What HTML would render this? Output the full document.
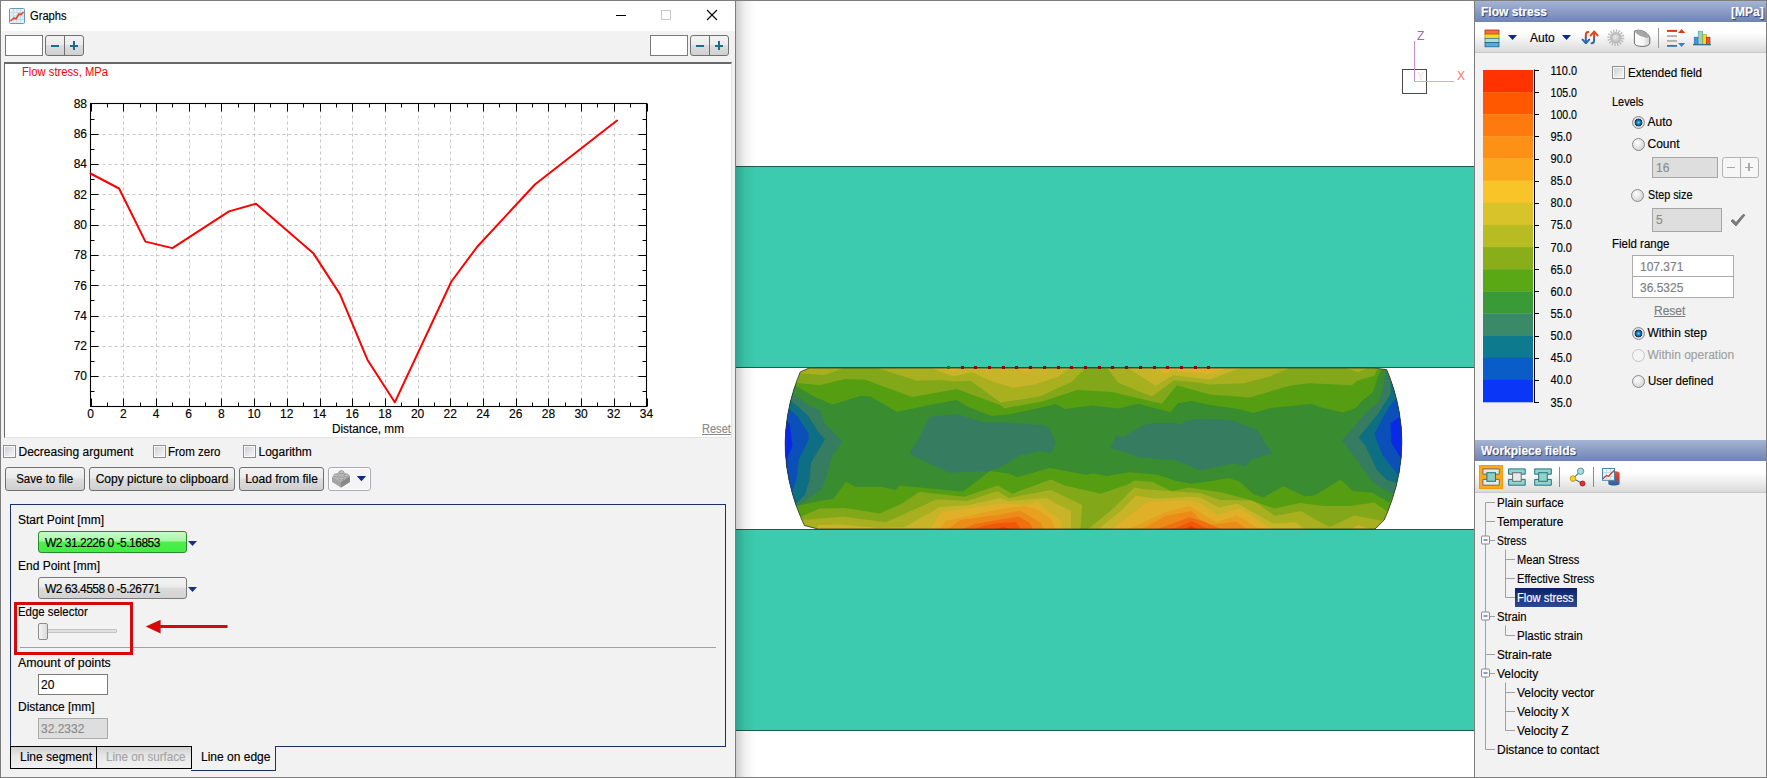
<!DOCTYPE html>
<html><head><meta charset="utf-8">
<style>
*{box-sizing:border-box}
html,body{margin:0;padding:0}
body{width:1767px;height:778px;position:relative;overflow:hidden;background:#f2f2f2;font-family:"Liberation Sans",sans-serif;font-size:12px;color:#000}
.a{position:absolute}
.t{position:absolute;font:12px/14px "Liberation Sans",sans-serif;white-space:nowrap;-webkit-text-stroke:0.15px currentColor}
svg.a{overflow:visible}
.spin{width:39px;height:21px;border:1px solid #707070;border-radius:3px;background:linear-gradient(#f3f3f3,#ebebeb 45%,#dddddd 50%,#d0d0d0)}
.spin:before{content:"";position:absolute;left:18px;top:0;width:1px;height:19px;background:#707070}
.spin:after{content:"";position:absolute;left:5px;top:8.5px;width:8px;height:2.5px;background:#1f6c8a;box-shadow:19px 0 0 #1f6c8a}
.spin i{position:absolute;left:26.8px;top:5.2px;width:2.5px;height:8.5px;background:#1f6c8a}
.cb{width:13px;height:13px;border:1px solid #8e8f8f;background:linear-gradient(135deg,#c8ccd2,#eeeeee 70%,#f4f4f4);box-shadow:inset 0 0 0 1px #f8f8f8}
.btn{-webkit-text-stroke:0.15px #000;height:24px;border:1px solid #707070;border-radius:3px;background:linear-gradient(#f2f2f2,#ebebeb 45%,#dddddd 50%,#cfcfcf);text-align:center;font:12px/22px "Liberation Sans",sans-serif;white-space:nowrap}

.hdr{background:linear-gradient(#a4b4d4,#8a9cc4 50%,#6e84b4)}
.hdt{color:#fff;font-weight:bold;text-shadow:1px 1px 1px #2a3a6a}
.tbar{background:linear-gradient(#ffffff,#ffffff 35%,#ececec 70%,#dadada);border-bottom:1px solid #c8c8c8}
.rad{width:13px;height:13px;border-radius:50%;border:1.2px solid #8a8a8a;background:radial-gradient(circle at 40% 35%,#ffffff,#d8d8d8 70%,#c8c8c8)}
.rad.on{background:radial-gradient(circle at 50% 50%,#60c8f4 0,#1a90d0 1.6px,#0e4a7a 3px,#163050 3.6px,#e4e4e4 4.2px,#d4d4d4 6px)}
.rad.dis{border-color:#c4c4c4;background:#f4f4f4}
</style></head><body>
<!-- ============ LEFT WINDOW ============ -->
<div class="a" style="left:0;top:0;width:736px;height:778px;background:#f2f2f2;border:1px solid #7d7d7d"></div>
<div class="a" style="left:1px;top:1px;width:734px;height:30px;background:#fff"></div>
<!-- title icon -->
<svg class="a" style="left:9px;top:8px" width="16" height="16" viewBox="0 0 16 16">
 <rect x="0.5" y="0.5" width="15" height="15" rx="1" fill="#e4f0f6" stroke="#6d98b4"/>
 <path d="M4.5 1v14M8 1v14M11.5 1v14M1 4.5h14M1 8h14M1 11.5h14" stroke="#c4dbe8" stroke-width="1"/>
 <path d="M1.5 13 L5 10 L7 11 L10 6 L12 6.5 L14.5 4" stroke="#e0452a" stroke-width="1.6" fill="none"/>
</svg>
<div class="t" style="left:30px;top:9px;transform:scaleX(0.93);transform-origin:0 0">Graphs</div>
<div class="a" style="left:616px;top:15px;width:10px;height:1px;background:#000"></div>
<div class="a" style="left:661px;top:10px;width:10px;height:10px;border:1px solid #c8c8c8"></div>
<svg class="a" style="left:706px;top:9px" width="12" height="12" viewBox="0 0 12 12"><path d="M1 1L11 11M11 1L1 11" stroke="#000" stroke-width="1.1"/></svg>

<!-- toolbar -->
<div class="a" style="left:5px;top:35px;width:38px;height:21px;background:#fff;border:1px solid #7a7a7a"></div>
<div class="a spin" style="left:45px;top:35px"><i></i></div>
<div class="a" style="left:650px;top:35px;width:38px;height:21px;background:#fff;border:1px solid #7a7a7a"></div>
<div class="a spin" style="left:690px;top:35px"><i></i></div>

<!-- chart panel -->
<div class="a" style="left:4px;top:62px;width:728px;height:376px;background:#fff;border-top:2px solid #696969;border-left:1px solid #696969;border-right:1px solid #e3e3e3;border-bottom:1px solid #e3e3e3"></div>
<svg class="a" style="left:0;top:0" width="736" height="440" viewBox="0 0 736 440">
<path d="M123.5,103.5V406.5M156.5,103.5V406.5M189.5,103.5V406.5M221.5,103.5V406.5M254.5,103.5V406.5M287.5,103.5V406.5M320.5,103.5V406.5M352.5,103.5V406.5M385.5,103.5V406.5M418.5,103.5V406.5M450.5,103.5V406.5M483.5,103.5V406.5M516.5,103.5V406.5M548.5,103.5V406.5M581.5,103.5V406.5M614.5,103.5V406.5M90.5,376.5H646.5M90.5,346.5H646.5M90.5,316.5H646.5M90.5,285.5H646.5M90.5,255.5H646.5M90.5,225.5H646.5M90.5,194.5H646.5M90.5,164.5H646.5M90.5,134.5H646.5" stroke="#c6c6c6" stroke-width="1" stroke-dasharray="3,3" fill="none"/>
<path d="M91.5,103.5v8M91.5,406.5v-8M107.5,103.5v4M107.5,406.5v-4M123.5,103.5v8M123.5,406.5v-8M140.5,103.5v4M140.5,406.5v-4M156.5,103.5v8M156.5,406.5v-8M172.5,103.5v4M172.5,406.5v-4M189.5,103.5v8M189.5,406.5v-8M205.5,103.5v4M205.5,406.5v-4M221.5,103.5v8M221.5,406.5v-8M238.5,103.5v4M238.5,406.5v-4M254.5,103.5v8M254.5,406.5v-8M270.5,103.5v4M270.5,406.5v-4M287.5,103.5v8M287.5,406.5v-8M303.5,103.5v4M303.5,406.5v-4M320.5,103.5v8M320.5,406.5v-8M336.5,103.5v4M336.5,406.5v-4M352.5,103.5v8M352.5,406.5v-8M369.5,103.5v4M369.5,406.5v-4M385.5,103.5v8M385.5,406.5v-8M401.5,103.5v4M401.5,406.5v-4M418.5,103.5v8M418.5,406.5v-8M434.5,103.5v4M434.5,406.5v-4M450.5,103.5v8M450.5,406.5v-8M467.5,103.5v4M467.5,406.5v-4M483.5,103.5v8M483.5,406.5v-8M499.5,103.5v4M499.5,406.5v-4M516.5,103.5v8M516.5,406.5v-8M532.5,103.5v4M532.5,406.5v-4M548.5,103.5v8M548.5,406.5v-8M565.5,103.5v4M565.5,406.5v-4M581.5,103.5v8M581.5,406.5v-8M597.5,103.5v4M597.5,406.5v-4M614.5,103.5v8M614.5,406.5v-8M630.5,103.5v4M630.5,406.5v-4M647.5,103.5v8M647.5,406.5v-8M90.5,406.5h8M646.5,406.5h-8M90.5,391.5h4M646.5,391.5h-4M90.5,376.5h8M646.5,376.5h-8M90.5,361.5h4M646.5,361.5h-4M90.5,346.5h8M646.5,346.5h-8M90.5,331.5h4M646.5,331.5h-4M90.5,316.5h8M646.5,316.5h-8M90.5,300.5h4M646.5,300.5h-4M90.5,285.5h8M646.5,285.5h-8M90.5,270.5h4M646.5,270.5h-4M90.5,255.5h8M646.5,255.5h-8M90.5,240.5h4M646.5,240.5h-4M90.5,225.5h8M646.5,225.5h-8M90.5,209.5h4M646.5,209.5h-4M90.5,194.5h8M646.5,194.5h-8M90.5,179.5h4M646.5,179.5h-4M90.5,164.5h8M646.5,164.5h-8M90.5,149.5h4M646.5,149.5h-4M90.5,134.5h8M646.5,134.5h-8M90.5,119.5h4M646.5,119.5h-4M90.5,103.5h8M646.5,103.5h-8" stroke="#000" stroke-width="1" fill="none"/>
<rect x="90.5" y="103.5" width="556.0" height="303.0" fill="none" stroke="#000" stroke-width="1.1"/>
<g font-family="Liberation Sans" font-size="12" fill="#000" stroke="#000" stroke-width="0.15"><text x="87" y="380.4" text-anchor="end">70</text><text x="87" y="350.1" text-anchor="end">72</text><text x="87" y="319.8" text-anchor="end">74</text><text x="87" y="289.5" text-anchor="end">76</text><text x="87" y="259.2" text-anchor="end">78</text><text x="87" y="228.9" text-anchor="end">80</text><text x="87" y="198.6" text-anchor="end">82</text><text x="87" y="168.3" text-anchor="end">84</text><text x="87" y="138.0" text-anchor="end">86</text><text x="87" y="107.7" text-anchor="end">88</text><text x="90.6" y="418" text-anchor="middle">0</text><text x="123.3" y="418" text-anchor="middle">2</text><text x="156.0" y="418" text-anchor="middle">4</text><text x="188.7" y="418" text-anchor="middle">6</text><text x="221.4" y="418" text-anchor="middle">8</text><text x="254.1" y="418" text-anchor="middle">10</text><text x="286.8" y="418" text-anchor="middle">12</text><text x="319.5" y="418" text-anchor="middle">14</text><text x="352.2" y="418" text-anchor="middle">16</text><text x="384.9" y="418" text-anchor="middle">18</text><text x="417.6" y="418" text-anchor="middle">20</text><text x="450.3" y="418" text-anchor="middle">22</text><text x="483.0" y="418" text-anchor="middle">24</text><text x="515.7" y="418" text-anchor="middle">26</text><text x="548.4" y="418" text-anchor="middle">28</text><text x="581.1" y="418" text-anchor="middle">30</text><text x="613.8" y="418" text-anchor="middle">32</text><text x="646.5" y="418" text-anchor="middle">34</text></g>
<text x="368" y="433" text-anchor="middle" font-family="Liberation Sans" font-size="12" stroke="#000" stroke-width="0.15" textLength="72" lengthAdjust="spacingAndGlyphs">Distance, mm</text>
<text x="22" y="76" font-family="Liberation Sans" font-size="12" fill="#ff0000" textLength="86" lengthAdjust="spacingAndGlyphs">Flow stress, MPa</text>
<polyline fill="none" stroke="#ff0000" stroke-width="2" stroke-linejoin="round" stroke-linecap="round" points="90.5,173.5 119.1,188.5 145.4,241.6 172.4,248.1 229,211.4 256,203.8 313.6,253.6 339.9,294.1 367.4,359.7 394.8,402.3 451.4,281.5 477,247 534.9,184.5 617,120.5"/>
</svg>
<div class="t" style="left:702px;top:422px;color:#8a8a8a;text-decoration:underline;transform:scaleX(0.92);transform-origin:0 0">Reset</div>

<!-- checkboxes -->
<div class="a cb" style="left:3px;top:445px"></div><div class="t" style="left:18.5px;top:445px">Decreasing argument</div>
<div class="a cb" style="left:153px;top:445px"></div><div class="t" style="left:168px;top:445px;transform:scaleX(0.96);transform-origin:0 0">From zero</div>
<div class="a cb" style="left:243px;top:445px"></div><div class="t" style="left:258.5px;top:445px">Logarithm</div>

<!-- buttons -->
<div class="a btn" style="left:5px;top:467px;width:80px"><span style="display:inline-block;transform:scaleX(0.96)">Save to file</span></div>
<div class="a btn" style="left:89px;top:467px;width:146px">Copy picture to clipboard</div>
<div class="a btn" style="left:239px;top:467px;width:85px">Load from file</div>
<div class="a" style="left:328px;top:467px;width:43px;height:24px;border:1px solid #a8acb0;border-radius:3px;background:#f4f4f4;box-shadow:inset 0 0 0 1px #fff"></div>
<svg class="a" style="left:326px;top:464px" width="48" height="30" viewBox="326 464 48 30">
 <path d="M332 477.2 L341.2 470.6 L349.8 476.3 L349.8 482 L341 487.6 L332.2 481.8Z" fill="#9c9c9c"/>
 <path d="M332 477.2 L341.2 470.6 L349.8 476.3 L341 482.2Z" fill="#b8b8b8"/>
 <path d="M332 477.2 L341 482.2 L341 487.6 L332.2 481.8Z" fill="#a4a4a4"/>
 <path d="M341 482.2 L349.8 476.3 L349.8 482 L341 487.6Z" fill="#888"/>
 <g fill="#c2c2c2" stroke="#7c7c7c" stroke-width="0.6">
  <ellipse cx="341.4" cy="472.2" rx="2.5" ry="1.5"/>
  <ellipse cx="336.1" cy="475.4" rx="2.5" ry="1.5"/>
  <ellipse cx="346.4" cy="475.4" rx="2.5" ry="1.5"/>
  <ellipse cx="341.4" cy="478.6" rx="2.5" ry="1.5"/>
 </g>
 <path d="M356.8 476H366.1L361.4 481.2Z" fill="#0c2a8a"/>
</svg>

<!-- group box -->
<div class="a" style="left:10px;top:504px;width:716px;height:243px;border:1px solid #1c2f6e"></div>
<div class="t" style="left:18px;top:513px">Start Point [mm]</div>
<div class="a" style="left:38px;top:531px;width:149px;height:22px;border:1px solid #2c8a2c;border-radius:3px;background:linear-gradient(#c8fac8,#a8f6a8 45%,#4cf04c 50%,#44ec44)"></div>
<div class="t" style="left:45px;top:536px;letter-spacing:-0.5px">W2 31.2226 0 -5.16853</div>
<svg class="a" style="left:187px;top:540px" width="11" height="7" viewBox="0 0 11 7"><path d="M1 1H10L5.5 6Z" fill="#1a2e86"/></svg>
<div class="t" style="left:18px;top:559px">End Point [mm]</div>
<div class="a" style="left:38px;top:577px;width:149px;height:22px;border:1px solid #7a7a7a;border-radius:3px;background:linear-gradient(#f4f4f4,#ececec 45%,#dcdcdc 50%,#d2d2d2)"></div>
<div class="t" style="left:45px;top:582px;letter-spacing:-0.5px">W2 63.4558 0 -5.26771</div>
<svg class="a" style="left:187px;top:586px" width="11" height="7" viewBox="0 0 11 7"><path d="M1 1H10L5.5 6Z" fill="#1a2e86"/></svg>

<div class="t" style="left:18px;top:605px;transform:scaleX(0.95);transform-origin:0 0">Edge selector</div>
<div class="a" style="left:46px;top:629px;width:71px;height:4px;background:#e0e0e0;border:1px solid #c4c4c4;border-radius:1px"></div>
<div class="a" style="left:38px;top:623px;width:10px;height:17px;border:1px solid #8c8c8c;border-radius:2px;background:linear-gradient(90deg,#f4f4f4,#dcdcdc)"></div>
<div class="a" style="left:20px;top:647px;width:696px;height:1px;background:#a0a0a0"></div>
<div class="a" style="left:14px;top:602px;width:119px;height:53px;border:3px solid #d40a0a"></div>
<svg class="a" style="left:140px;top:616px" width="92" height="22" viewBox="0 0 92 22"><path d="M5.7 10.6 L20.6 3.8 L20.6 9.1 L87.5 9.1 L87.5 12.1 L20.6 12.1 L20.6 17.4Z" fill="#d40a0a"/></svg>

<div class="t" style="left:18px;top:656px;transform:scaleX(1.03);transform-origin:0 0">Amount of points</div>
<div class="a" style="left:38px;top:674px;width:70px;height:21px;background:#fff;border:1px solid #7a7a7a"></div>
<div class="t" style="left:41px;top:678px">20</div>
<div class="t" style="left:18px;top:700px">Distance [mm]</div>
<div class="a" style="left:38px;top:718px;width:70px;height:21px;background:#dedede;border:1px solid #ababab"></div>
<div class="t" style="left:41px;top:722px;color:#8c8c8c">32.2332</div>

<!-- tabs -->
<div class="a" style="left:10px;top:746px;width:87px;height:23px;border:1px solid #000;background:linear-gradient(#d0d0d0,#e6e6e6 40%,#f0f0f0)"></div>
<div class="t" style="left:20px;top:750px">Line segment</div>
<div class="a" style="left:96px;top:746px;width:96px;height:23px;border:1px solid #000;background:linear-gradient(#d0d0d0,#e6e6e6 40%,#f0f0f0)"></div>
<div class="t" style="left:106px;top:750px;color:#a4a4a4;transform:scaleX(0.97);transform-origin:0 0">Line on surface</div>
<div class="a" style="left:191px;top:746px;width:85px;height:25px;background:#f2f2f2;border-right:1px solid #1c2f6e;border-bottom:1px solid #1c2f6e"></div>
<div class="a" style="left:191px;top:746px;width:1px;height:23px;background:#000"></div>
<div class="t" style="left:201px;top:750px">Line on edge</div>
<!-- ============ VIEWPORT ============ -->
<div class="a" style="left:736px;top:0;width:738px;height:778px;background:#fff;border-top:1px solid #7d7d7d;border-bottom:1px solid #7d7d7d"></div>
<div class="a" style="left:736px;top:166px;width:738px;height:202px;background:#3ccbae;border-top:1px solid #1f5a4c;border-bottom:1px solid #1f5a4c"></div>
<div class="a" style="left:736px;top:529px;width:738px;height:202px;background:#3ccbae;border-top:1px solid #1f5a4c;border-bottom:1px solid #1f5a4c"></div>
<svg class="a" style="left:0;top:0" width="1767" height="778" viewBox="0 0 1767 778">
<defs><clipPath id="wp"><polygon points="809.0,368.0 1373.0,368.0 1386.6,369.5 1387.6,372.0 1389.2,376.0 1391.4,382.0 1394.0,390.0 1396.7,400.0 1399.2,412.0 1401.1,426.0 1401.8,442.0 1401.1,458.0 1399.2,472.0 1396.2,486.0 1392.0,500.0 1387.6,512.0 1384.2,520.0 1375.0,529.0 818.0,529.0 804.5,525.5 801.1,518.0 796.3,506.0 792.5,494.0 789.0,480.0 786.6,466.0 785.4,452.0 785.2,442.0 785.8,430.0 787.5,416.0 790.3,402.0 793.7,390.0 797.1,380.0 800.2,372.0"/></clipPath></defs>
<g clip-path="url(#wp)">
<polygon fill="#82a81a" points="770.0,360.0 1410.0,360.0 1410.0,540.0 770.0,540.0"/>
<polygon fill="#a8b020" points="770.0,360.0 770.0,378.0 796.0,378.0 800.5,373.3 824.8,375.0 842.3,368.4 844.7,366.0 870.9,366.0 917.0,380.8 941.9,380.0 954.3,381.4 970.5,380.8 990.0,395.1 1000.6,402.6 1039.8,396.4 1072.2,381.4 1087.1,366.0 1105.8,366.0 1118.2,382.7 1151.9,396.4 1174.3,380.2 1200.0,382.7 1208.7,384.5 1243.6,383.3 1269.7,376.5 1294.6,366.0 1339.4,366.0 1358.1,372.1 1371.8,366.0 1410.0,366.0 1410.0,360.0"/>
<polygon fill="#c8b428" points="926.9,366.0 953.0,376.5 971.7,372.1 989.2,380.2 1012.4,387.7 1034.8,384.5 1058.5,376.5 1072.2,366.0 1072.0,360.0 927.0,360.0"/>
<polygon fill="#c8b428" points="1124.5,366.0 1155.6,385.8 1173.0,375.2 1210.0,379.6 1236.1,369.6 1249.8,366.0 1250.0,360.0 1124.0,360.0"/>
<polygon fill="#e0b028" points="941.9,366.0 953.0,372.1 961.8,366.0 962.0,360.0 942.0,360.0"/>
<polygon fill="#e0b028" points="1011.2,366.0 1024.9,372.7 1039.8,366.0 1040.0,360.0 1011.0,360.0"/>
<polygon fill="#e0b028" points="1156.8,366.0 1164.3,374.0 1171.8,370.8 1210.0,374.0 1233.6,366.0 1234.0,360.0 1157.0,360.0"/>
<polygon fill="#a8b020" points="770.0,518.0 808.6,519.8 818.6,518.6 843.5,516.7 885.8,522.3 936.9,499.3 966.8,501.1 997.5,491.2 1008.7,498.0 1051.0,490.0 1082.1,504.9 1080.3,531.0 1085.9,531.0 1114.5,507.4 1134.4,487.5 1144.4,489.3 1189.2,492.4 1200.0,493.0 1219.9,499.9 1253.5,500.5 1274.7,516.1 1300.8,511.1 1329.5,527.3 1354.4,515.5 1380.5,520.4 1410.0,518.0 1410.0,540.0 770.0,540.0"/>
<polygon fill="#c8b428" points="816.0,531.0 818.0,525.0 840.0,524.5 880.0,528.0 905.0,527.0 940.0,507.0 969.0,505.0 1000.0,498.0 1008.0,501.0 1047.0,498.0 1051.0,501.0 1071.0,511.0 1071.0,531.0 1071.0,540.0 816.0,540.0"/>
<polygon fill="#c8b428" points="1096.0,531.0 1122.0,510.0 1136.0,495.5 1156.0,498.7 1189.0,496.8 1200.0,497.4 1218.7,507.4 1237.4,503.6 1273.5,523.6 1295.9,522.3 1305.8,531.0 1305.8,540.0 1096.0,540.0"/>
<polygon fill="#c8b428" points="1349.4,531.0 1358.1,524.8 1374.3,531.0 1374.3,540.0 1349.4,540.0"/>
<polygon fill="#e0b028" points="929.4,531.0 940.6,512.4 1000.0,503.6 1027.4,504.9 1037.3,501.8 1048.5,511.1 1061.0,521.0 1062.2,531.0 1062.2,540.0 929.4,540.0"/>
<polygon fill="#e0b028" points="1109.5,531.0 1148.1,501.8 1189.2,500.5 1200.0,503.0 1217.4,514.8 1239.8,508.6 1274.7,531.0 1274.7,540.0 1109.5,540.0"/>
<polygon fill="#e8a020" points="938.0,531.0 945.6,521.0 1000.0,509.0 1023.6,505.7 1038.0,510.0 1052.0,520.0 1056.0,531.0 1056.0,540.0 938.0,540.0"/>
<polygon fill="#e8a020" points="1124.5,531.0 1164.3,512.4 1189.2,506.0 1200.0,512.4 1216.2,522.3 1237.4,515.5 1262.3,531.0 1262.3,540.0 1124.5,540.0"/>
<polygon fill="#ec8c18" points="946.0,531.0 960.0,520.0 1000.0,514.5 1020.0,510.5 1040.0,522.0 1045.0,531.0 1045.0,540.0 946.0,540.0"/>
<polygon fill="#ec8c18" points="1138.2,531.0 1165.5,516.1 1191.7,511.1 1200.0,519.8 1211.2,524.8 1236.1,521.7 1249.8,531.0 1249.8,540.0 1138.2,540.0"/>
<polygon fill="#f07010" points="958.0,531.0 975.0,524.0 1000.0,519.5 1018.6,516.5 1030.0,523.0 1034.0,531.0 1034.0,540.0 958.0,540.0"/>
<polygon fill="#f07010" points="1151.9,531.0 1189.2,517.3 1205.0,522.0 1225.0,531.0 1225.0,540.0 1151.9,540.0"/>
<polygon fill="#f05808" points="968.0,531.0 985.0,525.5 1000.0,523.0 1016.0,522.0 1022.0,531.0 1022.0,540.0 968.0,540.0"/>
<polygon fill="#f05808" points="1169.3,531.0 1191.7,521.0 1212.0,531.0 1212.0,540.0 1169.3,540.0"/>
<polygon fill="#f03a00" points="990.0,531.0 1003.0,527.0 1018.0,531.0 1018.0,540.0 990.0,540.0"/>
<polygon fill="#f03a00" points="1180.0,531.0 1191.0,526.0 1202.0,531.0 1202.0,540.0 1180.0,540.0"/>
<polygon fill="#559e12" points="770.0,382.0 796.8,382.7 819.8,385.2 844.7,378.9 864.7,379.6 912.0,397.0 956.8,388.9 1000.0,405.1 1004.9,408.2 1042.3,401.4 1077.2,390.1 1112.0,392.0 1161.8,403.8 1176.8,385.2 1210.0,394.5 1249.8,397.6 1289.6,385.8 1309.6,383.3 1351.9,385.2 1356.9,380.8 1374.3,375.8 1376.8,370.2 1379.3,369.0 1410.0,369.0 1410.0,512.0 1388.0,512.0 1374.3,502.4 1350.0,506.0 1324.5,506.1 1300.0,503.0 1274.7,508.6 1250.0,500.0 1222.0,492.4 1200.0,489.3 1189.2,487.5 1171.8,491.2 1151.9,481.8 1134.4,480.6 1128.2,484.3 1100.8,493.7 1064.7,485.6 1051.0,479.4 1012.4,493.7 997.5,485.6 964.3,496.8 935.6,493.7 919.4,491.8 903.3,503.0 879.6,513.6 844.7,508.0 819.8,508.6 802.4,516.1 770.0,516.0"/>
<polygon fill="#3a8c30" points="770.0,380.0 794.9,385.2 812.4,395.7 832.3,404.5 860.9,395.7 870.9,396.4 897.0,412.0 935.6,403.8 956.8,400.0 969.2,407.5 991.7,416.0 1009.9,414.3 1056.0,404.0 1064.7,409.0 1092.1,405.4 1118.2,408.5 1138.2,403.7 1170.5,411.9 1178.0,403.2 1191.7,401.0 1210.0,405.0 1239.8,409.3 1253.5,413.1 1271.0,408.1 1312.0,403.7 1319.5,406.9 1343.2,412.5 1355.6,408.0 1363.1,400.0 1373.1,392.0 1378.0,376.5 1381.8,369.6 1410.0,369.0 1410.0,500.0 1394.2,493.7 1389.2,502.4 1371.8,492.4 1353.1,491.2 1340.7,479.4 1314.5,495.5 1304.6,496.2 1283.4,486.2 1263.5,497.4 1253.5,494.3 1239.8,481.8 1228.6,478.1 1210.0,481.2 1191.7,483.7 1176.8,481.2 1158.1,474.7 1129.4,472.2 1107.0,475.9 1093.3,473.5 1085.9,474.7 1049.8,467.9 1017.4,477.2 1008.7,473.5 990.0,471.0 963.0,491.8 899.5,485.6 895.8,489.9 880.8,486.8 854.7,486.8 846.0,481.8 833.5,498.7 819.8,501.1 797.4,506.1 770.0,508.0"/>
<polygon fill="#367c60" points="929.4,416.8 956.8,414.3 985.4,422.4 1007.4,422.4 1044.8,425.5 1048.5,427.4 1056.0,443.0 1051.0,452.9 1039.2,451.0 1019.9,455.4 1003.7,465.4 990.0,471.0 949.3,472.8 910.7,454.8 910.1,452.3 918.2,439.8"/>
<polygon fill="#367c60" points="1110.1,448.6 1116.4,435.5 1123.8,436.7 1142.5,425.5 1153.1,423.0 1174.3,423.0 1182.4,424.9 1184.2,421.2 1200.0,418.7 1231.1,419.9 1257.3,429.9 1271.6,453.5 1251.0,459.8 1245.4,466.6 1233.6,463.5 1200.0,470.3 1176.8,460.4 1138.2,457.3 1124.5,451.7"/>
<polygon fill="#367c60" points="770.0,385.0 790.3,391.7 808.8,405.1 820.1,410.2 824.2,422.6 842.3,441.7 832.3,456.0 826.1,477.0 822.3,488.7 804.9,501.1 797.4,506.1 770.0,510.0"/>
<polygon fill="#367c60" points="1410.0,365.0 1385.5,371.5 1384.3,380.2 1379.3,401.4 1366.8,412.0 1341.9,440.5 1353.1,454.8 1365.6,472.2 1373.1,482.5 1389.2,492.4 1410.0,495.0"/>
<polygon fill="#0e6e84" points="770.0,392.0 789.3,398.9 807.8,415.4 819.1,432.9 825.0,439.5 811.1,462.3 809.5,480.0 804.9,494.9 796.2,503.6 770.0,506.0"/>
<polygon fill="#0e6e84" points="1410.0,380.0 1390.5,382.7 1390.5,393.9 1378.0,413.7 1358.7,437.4 1365.6,446.1 1376.8,469.7 1386.8,480.0 1395.5,482.5 1410.0,484.0"/>
<polygon fill="#0a50b8" points="770.0,405.0 788.7,408.7 797.4,416.2 808.6,433.6 808.6,439.8 798.7,459.8 796.8,478.0 792.5,491.2 770.0,495.0"/>
<polygon fill="#0a50b8" points="1410.0,395.0 1394.2,400.0 1385.5,412.5 1374.9,433.0 1375.5,437.4 1383.0,456.0 1398.0,474.7 1410.0,476.0"/>
<polygon fill="#0a28e8" points="770.0,415.0 785.6,418.7 790.0,424.9 792.5,446.1 787.5,457.3 786.8,476.0 770.0,480.0"/>
<polygon fill="#0a28e8" points="1410.0,412.0 1401.7,414.9 1390.5,423.7 1391.1,442.3 1400.4,457.3 1410.0,460.0"/>
</g>
<polygon fill="none" stroke="#2a3a2a" stroke-opacity="0.8" stroke-width="1" points="809.0,368.0 1373.0,368.0 1386.6,369.5 1387.6,372.0 1389.2,376.0 1391.4,382.0 1394.0,390.0 1396.7,400.0 1399.2,412.0 1401.1,426.0 1401.8,442.0 1401.1,458.0 1399.2,472.0 1396.2,486.0 1392.0,500.0 1387.6,512.0 1384.2,520.0 1375.0,529.0 818.0,529.0 804.5,525.5 801.1,518.0 796.3,506.0 792.5,494.0 789.0,480.0 786.6,466.0 785.4,452.0 785.2,442.0 785.8,430.0 787.5,416.0 790.3,402.0 793.7,390.0 797.1,380.0 800.2,372.0"/>
<rect x="947" y="366" width="3" height="3" fill="#1a7a1a" shape-rendering="crispEdges"/>
<rect x="961" y="366" width="3" height="3" fill="#8a0a0a" shape-rendering="crispEdges"/>
<rect x="974" y="366" width="3" height="3" fill="#8a0a0a" shape-rendering="crispEdges"/>
<rect x="988" y="366" width="3" height="3" fill="#8a0a0a" shape-rendering="crispEdges"/>
<rect x="1002" y="366" width="3" height="3" fill="#8a0a0a" shape-rendering="crispEdges"/>
<rect x="1015" y="366" width="3" height="3" fill="#8a0a0a" shape-rendering="crispEdges"/>
<rect x="1029" y="366" width="3" height="3" fill="#8a0a0a" shape-rendering="crispEdges"/>
<rect x="1043" y="366" width="3" height="3" fill="#8a0a0a" shape-rendering="crispEdges"/>
<rect x="1057" y="366" width="3" height="3" fill="#8a0a0a" shape-rendering="crispEdges"/>
<rect x="1070" y="366" width="3" height="3" fill="#8a0a0a" shape-rendering="crispEdges"/>
<rect x="1084" y="366" width="3" height="3" fill="#8a0a0a" shape-rendering="crispEdges"/>
<rect x="1098" y="366" width="3" height="3" fill="#8a0a0a" shape-rendering="crispEdges"/>
<rect x="1111" y="366" width="3" height="3" fill="#8a0a0a" shape-rendering="crispEdges"/>
<rect x="1125" y="366" width="3" height="3" fill="#8a0a0a" shape-rendering="crispEdges"/>
<rect x="1139" y="366" width="3" height="3" fill="#8a0a0a" shape-rendering="crispEdges"/>
<rect x="1153" y="366" width="3" height="3" fill="#8a0a0a" shape-rendering="crispEdges"/>
<rect x="1166" y="366" width="3" height="3" fill="#8a0a0a" shape-rendering="crispEdges"/>
<rect x="1180" y="366" width="3" height="3" fill="#8a0a0a" shape-rendering="crispEdges"/>
<rect x="1194" y="366" width="3" height="3" fill="#8a0a0a" shape-rendering="crispEdges"/>
<rect x="1207" y="366" width="3" height="3" fill="#8a0a0a" shape-rendering="crispEdges"/>
</svg>
<div class="a" style="left:736px;top:1px;width:20px;height:776px;background:linear-gradient(90deg,rgba(0,0,0,0.19),rgba(0,0,0,0.06) 45%,rgba(0,0,0,0))"></div>
<!-- axis gizmo -->
<svg class="a" style="left:1390px;top:20px" width="84" height="80" viewBox="0 0 84 80">
 <rect x="12.5" y="49.5" width="24" height="24" fill="none" stroke="#4a4a4a" stroke-width="1"/>
 <line x1="24.5" y1="21" x2="24.5" y2="61.5" stroke="#c890d0" stroke-width="1"/>
 <line x1="24.5" y1="61.5" x2="64" y2="61.5" stroke="#ffa0a0" stroke-width="1"/>
 <text x="27" y="20" font-family="Liberation Sans" font-size="12" fill="#a860b8">Z</text>
 <text x="67" y="60" font-family="Liberation Sans" font-size="12" fill="#ff7070">X</text>
 <text x="27" y="60" font-family="Liberation Sans" font-size="11" fill="#ffd8d8">Y</text>
</svg>
<!-- ============ RIGHT PANEL ============ -->
<div class="a" style="left:1474px;top:0;width:293px;height:778px;background:#f2f2f2;border:1px solid #7d7d7d"></div>
<div class="a hdr" style="left:1475px;top:1px;width:291px;height:21px"></div>
<div class="t hdt" style="left:1481px;top:5px">Flow stress</div>
<div class="t hdt" style="left:1731px;top:5px">[MPa]</div>
<div class="a tbar" style="left:1475px;top:22px;width:291px;height:31px"></div>
<!-- toolbar 1 icons -->
<svg class="a" style="left:1484px;top:29px" width="240" height="20" viewBox="1484 29 240 20">
 <rect x="1485" y="30" width="14" height="4.2" fill="#f07040" stroke="#b82a0a" stroke-width="0.8"/>
 <rect x="1485" y="34.2" width="14" height="4.2" fill="#f8d820" stroke="#b08a10" stroke-width="0.8"/>
 <rect x="1485" y="38.4" width="14" height="4.2" fill="#a8e0d8" stroke="#3a8088" stroke-width="0.8"/>
 <rect x="1485" y="42.6" width="14" height="4.2" fill="#58a8e0" stroke="#1e6a88" stroke-width="0.8"/>
 <path d="M1508 35H1517L1512.5 40Z" fill="#0c2a8a"/>
 <path d="M1562 35H1571L1566.5 40Z" fill="#0c2a8a"/>
 <!-- swap arrows -->
 <defs>
  <linearGradient id="rb" gradientUnits="userSpaceOnUse" x1="0" y1="30" x2="0" y2="45"><stop offset="0.4" stop-color="#e04418"/><stop offset="0.6" stop-color="#2a68a8"/></linearGradient>
  <linearGradient id="cyl" x1="0" y1="0" x2="1" y2="0"><stop offset="0" stop-color="#ffffff"/><stop offset="0.6" stop-color="#f4f4f4"/><stop offset="1" stop-color="#cfcfcf"/></linearGradient>
  <radialGradient id="gr" cx="0.45" cy="0.4" r="0.6"><stop offset="0" stop-color="#ececec"/><stop offset="1" stop-color="#c4c4c4"/></radialGradient>
 </defs>
 <g fill="none" stroke="url(#rb)" stroke-width="2" stroke-linecap="round" stroke-linejoin="round">
  <path d="M1588.3 32 C1586.5 32 1585.8 33 1585.8 35 L1585.8 43"/>
  <path d="M1582.6 39.6 L1585.8 43.2 L1589.2 39.6"/>
  <path d="M1591.6 43.2 C1593.4 43.2 1594.1 42.2 1594.1 40.2 L1594.1 31.8"/>
  <path d="M1590.7 35.4 L1594.1 31.6 L1597.5 35.4"/>
 </g>
 <!-- gear -->
 <circle cx="1615.8" cy="37.8" r="6.8" fill="none" stroke="#bcbcbc" stroke-width="3.4" stroke-dasharray="1.35,1.3"/>
 <circle cx="1615.8" cy="37.8" r="5.9" fill="#bdbdbd"/>
 <circle cx="1615.8" cy="37.8" r="3.6" fill="url(#gr)"/>
 <!-- cylinder -->
 <path d="M1634.4 31.2 L1634.4 43 C1634.4 47.6 1649.8 47.6 1649.8 43 L1649.8 37.6 C1647.5 31 1638.5 28.6 1634.4 31.2Z" fill="url(#cyl)" stroke="#6e6e6e" stroke-width="1"/>
 <path d="M1634.6 31.2 C1638.5 28.8 1647.3 31.2 1649.6 37.6 C1645 38.4 1637.6 35.6 1634.6 31.2Z" fill="#a6a6a6"/>
 <line x1="1658.5" y1="28" x2="1658.5" y2="48" stroke="#9a9a9a" stroke-width="1"/>
 <!-- levels icon -->
 <rect x="1667" y="29.9" width="10" height="2" fill="#d83a10"/>
 <rect x="1667" y="35.2" width="10" height="1.7" fill="#ababab"/>
 <rect x="1667" y="40.1" width="10" height="1.7" fill="#ababab"/>
 <rect x="1667" y="45" width="10" height="1.8" fill="#2e78b8"/>
 <path d="M1678 33H1685.2L1681.6 29Z" fill="#e03a10"/>
 <path d="M1678 43.1H1685.2L1681.6 47Z" fill="#3a7ec8"/>
 <!-- bar chart -->
 <rect x="1694.2" y="37.2" width="3.8" height="7" fill="#4a90d8" stroke="#2a6aa8" stroke-width="0.6"/>
 <rect x="1698.2" y="31.2" width="4.5" height="13" fill="#90d4c4" stroke="#4a9a90" stroke-width="0.6"/>
 <rect x="1702.8" y="34.3" width="3.6" height="9.9" fill="#f8dc10" stroke="#c09020" stroke-width="0.6"/>
 <rect x="1706.4" y="37.2" width="3.6" height="7" fill="#e85a30" stroke="#a82010" stroke-width="0.6"/>
 <rect x="1693" y="44.1" width="18" height="1.2" fill="#2a6a88"/>
</svg>
<div class="t" style="left:1530px;top:30.5px">Auto</div>

<svg class="a" style="left:1480px;top:60px" width="110" height="350" viewBox="1480 60 110 350">
<rect x="1483" y="70.00" width="50" height="22.43" fill="#ff3300"/>
<rect x="1483" y="92.13" width="50" height="22.43" fill="#ff5800"/>
<rect x="1483" y="114.27" width="50" height="22.43" fill="#ff7a0e"/>
<rect x="1483" y="136.40" width="50" height="22.43" fill="#fd9116"/>
<rect x="1483" y="158.53" width="50" height="22.43" fill="#fca81e"/>
<rect x="1483" y="180.67" width="50" height="22.43" fill="#f8c42a"/>
<rect x="1483" y="202.80" width="50" height="22.43" fill="#d8c42a"/>
<rect x="1483" y="224.93" width="50" height="22.43" fill="#b6bc22"/>
<rect x="1483" y="247.07" width="50" height="22.43" fill="#8aae1a"/>
<rect x="1483" y="269.20" width="50" height="22.43" fill="#5aa814"/>
<rect x="1483" y="291.33" width="50" height="22.43" fill="#3a9a38"/>
<rect x="1483" y="313.47" width="50" height="22.43" fill="#3a8a6a"/>
<rect x="1483" y="335.60" width="50" height="22.43" fill="#0e7a8e"/>
<rect x="1483" y="357.73" width="50" height="22.43" fill="#0a5cc8"/>
<rect x="1483" y="379.87" width="50" height="22.43" fill="#0a36f8"/>
<path d="M1534.5,69.5V402.5M1534,70.5h5M1534,92.5h5M1534,114.5h5M1534,136.5h5M1534,159.5h5M1534,181.5h5M1534,203.5h5M1534,225.5h5M1534,247.5h5M1534,269.5h5M1534,291.5h5M1534,313.5h5M1534,336.5h5M1534,358.5h5M1534,380.5h5M1534,402.5h5" stroke="#000" stroke-width="1" fill="none"/>
<g font-family="Liberation Sans" font-size="12" fill="#000" stroke="#000" stroke-width="0.15">
<text x="1550.5" y="74.5" textLength="26.5" lengthAdjust="spacingAndGlyphs">110.0</text>
<text x="1550.5" y="96.6" textLength="26.5" lengthAdjust="spacingAndGlyphs">105.0</text>
<text x="1550.5" y="118.8" textLength="26.5" lengthAdjust="spacingAndGlyphs">100.0</text>
<text x="1550.5" y="140.9" textLength="21.5" lengthAdjust="spacingAndGlyphs">95.0</text>
<text x="1550.5" y="163.0" textLength="21.5" lengthAdjust="spacingAndGlyphs">90.0</text>
<text x="1550.5" y="185.2" textLength="21.5" lengthAdjust="spacingAndGlyphs">85.0</text>
<text x="1550.5" y="207.3" textLength="21.5" lengthAdjust="spacingAndGlyphs">80.0</text>
<text x="1550.5" y="229.4" textLength="21.5" lengthAdjust="spacingAndGlyphs">75.0</text>
<text x="1550.5" y="251.6" textLength="21.5" lengthAdjust="spacingAndGlyphs">70.0</text>
<text x="1550.5" y="273.7" textLength="21.5" lengthAdjust="spacingAndGlyphs">65.0</text>
<text x="1550.5" y="295.8" textLength="21.5" lengthAdjust="spacingAndGlyphs">60.0</text>
<text x="1550.5" y="318.0" textLength="21.5" lengthAdjust="spacingAndGlyphs">55.0</text>
<text x="1550.5" y="340.1" textLength="21.5" lengthAdjust="spacingAndGlyphs">50.0</text>
<text x="1550.5" y="362.2" textLength="21.5" lengthAdjust="spacingAndGlyphs">45.0</text>
<text x="1550.5" y="384.4" textLength="21.5" lengthAdjust="spacingAndGlyphs">40.0</text>
<text x="1550.5" y="406.5" textLength="21.5" lengthAdjust="spacingAndGlyphs">35.0</text>
</g></svg>

<div class="a cb" style="left:1612px;top:66px"></div><div class="t" style="left:1627.5px;top:65.5px;transform:scaleX(0.973);transform-origin:0 0">Extended field</div>
<div class="t" style="left:1612px;top:95px;transform:scaleX(0.91);transform-origin:0 0">Levels</div>
<div class="a rad on" style="left:1631.5px;top:115.5px"></div><div class="t" style="left:1647.5px;top:114.5px">Auto</div>
<div class="a rad" style="left:1631.5px;top:137.5px"></div><div class="t" style="left:1647.5px;top:137px">Count</div>
<div class="a" style="left:1652px;top:157px;width:66px;height:21px;background:#dedede;border:1px solid #a6a6a6"></div>
<div class="t" style="left:1656px;top:161px;color:#8c8c8c">16</div>
<div class="a" style="left:1722px;top:157px;width:37px;height:21px;border:1px solid #b4b4b4;border-radius:3px;background:#f6f6f6"></div>
<div class="a" style="left:1740px;top:158px;width:1px;height:19px;background:#b4b4b4"></div>
<div class="a" style="left:1727px;top:166.5px;width:8px;height:1.6px;background:#a8a8a8"></div>
<div class="a" style="left:1745px;top:166.5px;width:8px;height:1.6px;background:#a8a8a8"></div>
<div class="a" style="left:1748.2px;top:163.3px;width:1.6px;height:8px;background:#a8a8a8"></div>
<div class="a rad" style="left:1631px;top:188.5px"></div><div class="t" style="left:1647.5px;top:188px;transform:scaleX(0.9);transform-origin:0 0">Step size</div>
<div class="a" style="left:1652px;top:208px;width:70px;height:24px;background:#dedede;border:1px solid #a6a6a6"></div>
<div class="t" style="left:1656px;top:213px;color:#8c8c8c">5</div>
<svg class="a" style="left:1730px;top:213px" width="16" height="15" viewBox="0 0 16 15"><path d="M1 8 L6 13 L15 2 L13 1.5 L6 9.5 L3 6.5Z" fill="#7c7c7c" stroke="#6a6a6a" stroke-width="0.8"/></svg>
<div class="t" style="left:1612px;top:236.5px;transform:scaleX(0.958);transform-origin:0 0">Field range</div>
<div class="a" style="left:1632px;top:255px;width:102px;height:22px;background:#fff;border:1px solid #ababab"></div>
<div class="a" style="left:1632px;top:276px;width:102px;height:22px;background:#fff;border:1px solid #ababab"></div>
<div class="t" style="left:1640px;top:260px;color:#7e7e7e">107.371</div>
<div class="t" style="left:1640px;top:280.5px;color:#7e7e7e">36.5325</div>
<div class="t" style="left:1654px;top:304px;color:#7e7e7e;text-decoration:underline">Reset</div>
<div class="a rad on" style="left:1631.5px;top:326.5px"></div><div class="t" style="left:1647.5px;top:326px">Within step</div>
<div class="a rad dis" style="left:1631.5px;top:348.5px"></div><div class="t" style="left:1647.5px;top:348px;color:#a0a0a0">Within operation</div>
<div class="a rad" style="left:1631.5px;top:374.5px"></div><div class="t" style="left:1647.5px;top:374px;transform:scaleX(0.96);transform-origin:0 0">User defined</div>

<!-- workpiece fields -->
<div class="a hdr" style="left:1475px;top:440px;width:291px;height:21px"></div>
<div class="t hdt" style="left:1481px;top:443.5px">Workpiece fields</div>
<div class="a tbar" style="left:1475px;top:461px;width:291px;height:32px"></div>
<svg class="a" style="left:1478px;top:464px" width="150" height="26" viewBox="1478 464 150 26">
 <defs><linearGradient id="cyl2" x1="0" y1="0" x2="0" y2="1"><stop offset="0" stop-color="#e85040"/><stop offset="0.55" stop-color="#c83a30"/><stop offset="0.75" stop-color="#3a6aa8"/><stop offset="1" stop-color="#2a5a98"/></linearGradient></defs>
 <rect x="1479.5" y="465.5" width="23" height="23" fill="#ffa81c" stroke="#f59a10" stroke-width="1"/>
 <path d="M1482.9 468.9h16.4v5.3h-16.4zM1482.9 479.4h16.4v5.8h-16.4z" fill="#e8e8e8" stroke="#6c6c6c" stroke-width="1"/>
 <rect x="1486.9" y="472.7" width="8.6" height="8.6" fill="#88d0c8" stroke="#2a7080" stroke-width="1"/>
 <path d="M1508.6 468.9h16.6v5.3h-16.6zM1508.6 479.4h16.6v5.8h-16.6z" fill="#90d4cc" stroke="#2a7080" stroke-width="1"/>
 <rect x="1512.6" y="472.7" width="8.6" height="8.6" fill="#e8e8e8" stroke="#6c6c6c" stroke-width="1"/>
 <path d="M1534.7 468.9h16.6v5.3h-16.6zM1534.7 479.4h16.6v5.8h-16.6z" fill="#90d4cc" stroke="#2a7080" stroke-width="1"/>
 <rect x="1538.7" y="472.7" width="8.6" height="8.6" fill="#90d4cc" stroke="#2a7080" stroke-width="1"/>
 <line x1="1559.5" y1="467" x2="1559.5" y2="487" stroke="#8a8a8a"/>
 <path d="M1573 478.6 L1580.6 471.2 M1573 478.6 L1582.5 483.5" stroke="#3a7a98" stroke-width="1.1"/>
 <circle cx="1580.6" cy="471.2" r="3.2" fill="#a8dcd8" stroke="#3a8a98" stroke-width="0.8"/>
 <circle cx="1573" cy="478.6" r="2.8" fill="#f8d020" stroke="#b89010" stroke-width="0.8"/>
 <circle cx="1582.5" cy="483.5" r="2.5" fill="#e03030" stroke="#a01010" stroke-width="0.8"/>
 <line x1="1593.5" y1="467" x2="1593.5" y2="487" stroke="#8a8a8a"/>
 <path d="M1608.3 473 C1608.3 470.5 1619.6 470.5 1619.6 473 L1619.6 483.5 C1619.6 486.3 1608.3 486.3 1608.3 483.5Z" fill="url(#cyl2)"/>
 <rect x="1602.5" y="468.5" width="12" height="11.8" fill="#eef6fa" stroke="#4a86a8" stroke-width="1"/>
 <path d="M1606.5 469v11M1610.5 469v11M1603 472.5h11M1603 476.5h11" stroke="#b8d4e4" stroke-width="0.8"/>
 <path d="M1603 478.8 L1606.5 475.5 L1608.5 476.2 L1614 470.5" stroke="#e03828" stroke-width="1.2" fill="none"/>
</svg>

<!-- tree -->
<svg class="a" style="left:1475px;top:490px" width="150" height="270" viewBox="1475 490 150 270">
<path d="M1485.5,502.5V749.5M1485.5,502.5H1495M1485.5,521.5H1495M1485.5,540.5H1495M1505.5,559.5H1515M1505.5,578.5H1515M1505.5,597.5H1515M1485.5,616.5H1495M1505.5,635.5H1515M1485.5,654.5H1495M1485.5,673.5H1495M1505.5,692.5H1515M1505.5,711.5H1515M1505.5,730.5H1515M1485.5,749.5H1495M1505.5,549.5V597.5M1505.5,625.5V635.5M1505.5,682.5V730.5" stroke="#a0a0a0" stroke-width="1" fill="none"/>
<rect x="1481.5" y="536.0" width="8" height="8" rx="1" fill="#f8f8f8" stroke="#8a8a8a"/>
<path d="M1483.5,540.0h4" stroke="#2a3a8a" stroke-width="1"/>
<rect x="1481.5" y="612.0" width="8" height="8" rx="1" fill="#f8f8f8" stroke="#8a8a8a"/>
<path d="M1483.5,616.0h4" stroke="#2a3a8a" stroke-width="1"/>
<rect x="1481.5" y="669.0" width="8" height="8" rx="1" fill="#f8f8f8" stroke="#8a8a8a"/>
<path d="M1483.5,673.0h4" stroke="#2a3a8a" stroke-width="1"/>
</svg>
<div class="t" style="left:1497px;top:496.0px;transform:scaleX(0.96);transform-origin:0 0">Plain surface</div>
<div class="t" style="left:1497px;top:515.0px;transform:scaleX(0.985);transform-origin:0 0">Temperature</div>
<div class="t" style="left:1497px;top:534.0px;transform:scaleX(0.865);transform-origin:0 0">Stress</div>
<div class="t" style="left:1517px;top:553.0px;transform:scaleX(0.926);transform-origin:0 0">Mean Stress</div>
<div class="t" style="left:1517px;top:572.0px;transform:scaleX(0.93);transform-origin:0 0">Effective Stress</div>
<div class="a" style="left:1515px;top:588.0px;width:62px;height:19px;background:linear-gradient(#0c2268,#2c4a92)"></div>
<div class="t" style="left:1517px;top:591.0px;color:#fff;transform:scaleX(0.934);transform-origin:0 0">Flow stress</div>
<div class="t" style="left:1497px;top:610.0px;transform:scaleX(0.94);transform-origin:0 0">Strain</div>
<div class="t" style="left:1517px;top:629.0px;transform:scaleX(0.966);transform-origin:0 0">Plastic strain</div>
<div class="t" style="left:1497px;top:648.0px;transform:scaleX(0.98);transform-origin:0 0">Strain-rate</div>
<div class="t" style="left:1497px;top:667.0px;transform:scaleX(1.0);transform-origin:0 0">Velocity</div>
<div class="t" style="left:1517px;top:686.0px;transform:scaleX(1.0);transform-origin:0 0">Velocity vector</div>
<div class="t" style="left:1517px;top:705.0px;transform:scaleX(0.99);transform-origin:0 0">Velocity X</div>
<div class="t" style="left:1517px;top:724.0px;transform:scaleX(0.99);transform-origin:0 0">Velocity Z</div>
<div class="t" style="left:1497px;top:743.0px;transform:scaleX(1.0);transform-origin:0 0">Distance to contact</div>
</body></html>
